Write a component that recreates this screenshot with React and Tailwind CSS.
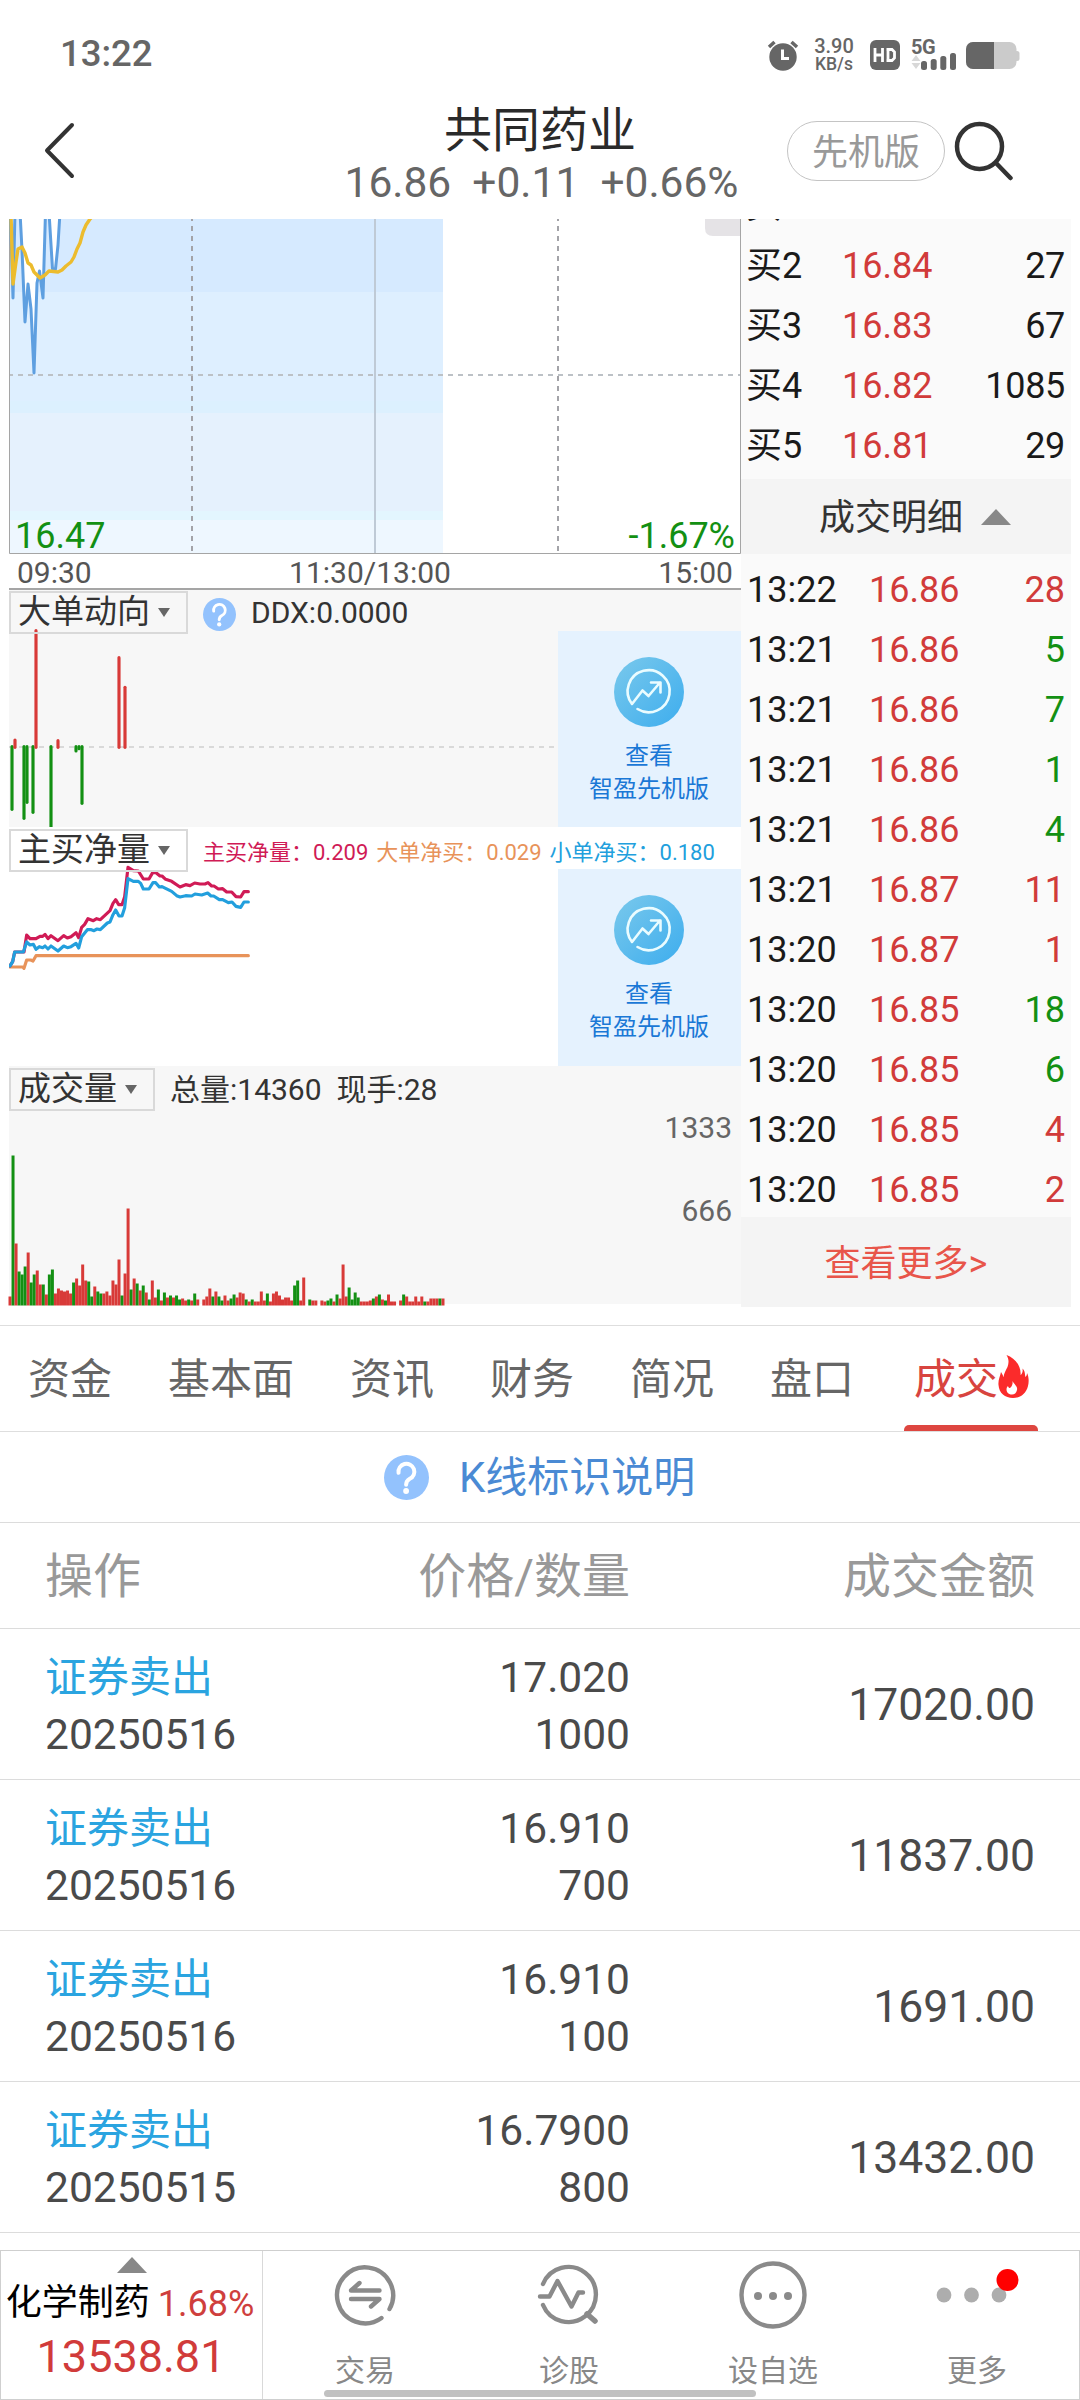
const buyRows = [
  { label: '买1' },
  { label: '买2', price: '16.84', qty: '27' },
  { label: '买3', price: '16.83', qty: '67' },
  { label: '买4', price: '16.82', qty: '1085' },
  { label: '买5', price: '16.81', qty: '29' },
]

const ticks = [
  { time: '13:22', price: '16.86', qty: '28', up: true },
  { time: '13:21', price: '16.86', qty: '5', up: false },
  { time: '13:21', price: '16.86', qty: '7', up: false },
  { time: '13:21', price: '16.86', qty: '1', up: false },
  { time: '13:21', price: '16.86', qty: '4', up: false },
  { time: '13:21', price: '16.87', qty: '11', up: true },
  { time: '13:20', price: '16.87', qty: '1', up: true },
  { time: '13:20', price: '16.85', qty: '18', up: false },
  { time: '13:20', price: '16.85', qty: '6', up: false },
  { time: '13:20', price: '16.85', qty: '4', up: true },
  { time: '13:20', price: '16.85', qty: '2', up: true },
]

const tabs = ['资金', '基本面', '资讯', '财务', '简况', '盘口']

const trades = [
  { date: '20250516', price: '17.020', qty: '1000', amount: '17020.00' },
  { date: '20250516', price: '16.910', qty: '700', amount: '11837.00' },
  { date: '20250516', price: '16.910', qty: '100', amount: '1691.00' },
  { date: '20250515', price: '16.7900', qty: '800', amount: '13432.00' },
]

// [x, from, to, up]
const ddxBars = [
  [36, 500, 688, false],
  [45, 480, 502, true],
  [72, 500, 715, false],
  [81, 500, 667, false],
  [99, 500, 697, false],
  [108, 152, 502, true],
  [153, 500, 742, false],
  [174, 482, 502, true],
  [228, 500, 513, false],
  [237, 500, 506, false],
  [246, 500, 670, false],
  [357, 233, 502, true],
  [375, 322, 502, true],
]

// one entry per minute: bar height + r (up) / g (down)
const volume = (
  '9r 150g 62r 34g 31g 39g 53r 23g 31g 35r 21r 21g 11r 31g 36g 12r 17r 15r 14r 15r 12r 23g 27r 20r 41r 25r 24g 9g 19r 14g ' +
  '12g 12r 14r 10r 25r 21r 46r 10g 32r 97r 16g 27r 22g 15r 20g 13r 6g 25r 8r 16g 5r 13g 8r 10g 8r 10g 6g 7r 5r 6g 5r 12g 6r 0r ' +
  '6r 9r 17r 9g 14r 9g 5g 10r 5r 7g 11g 8r 13r 12r 6g 4r 6g 4r 4r 14r 5r 12g 4r 12r 14r 10r 6r 8r 8r 5r 20g 25g 5r 28r 0r ' +
  '6g 5r 5r 0r 5r 4r 5g 7g 4r 11g 7r 41r 9r 18g 6g 13g 8g 4r 4r 4r 5r 7g 9r 11g 6r 5g 11r 4r 4r 0r 5r 11g 9r 4r 4r 9r 4r 9r 4g 4r 7r 7r 7r 7g 7r'
).split(' ').map((v) => ({ h: parseInt(v), up: v.endsWith('r') }))

const RED = '#d83a38'
const GREEN = '#139013'

const StatusBar = () => (
  <div className="h-[106px] flex items-center justify-between pl-[60px] pr-[60px] text-[#666]">
    <span className="text-[36.500px] leading-none font-medium pt-[2px]">13:22</span>
    <div className="flex items-center h-[34px] mt-1">
      <svg className="w-8 h-8" viewBox="0 0 32 32">
        <circle cx="16" cy="18" r="13.7" fill="#666" />
        <path d="M2 8 L7.5 3 M30 8 L24.5 3" stroke="#666" strokeWidth="3.5" fill="none" />
        <path d="M15.5 10.5 V19.5 H22" stroke="#fff" strokeWidth="3" fill="none" />
      </svg>
      <div className="ml-3 w-[46px] text-center font-medium">
        <div className="text-[20px] leading-[18px]">3.90</div>
        <div className="text-[17.5px] leading-[18px]">KB/s</div>
      </div>
      <svg className="ml-[13px] w-[30px] h-[30px]" viewBox="0 0 30 30">
        <rect width="30" height="30" rx="6" fill="#666" />
        <path d="M5 8 V22 M12.5 8 V22 M5 15 H12.5 M18 9.3 V20.7 M16.5 9.5 H22 L24.5 12 V18 L22 20.5 H16.5" stroke="#fff" strokeWidth="2.8" fill="none" />
      </svg>
      <div className="relative ml-[11px] w-[46px] h-[32px]">
        <span className="absolute left-0 -top-px text-[20px] leading-[18px] font-bold tracking-[-0.5px]">5G</span>
        <svg className="absolute inset-0 w-full h-full" viewBox="0 0 46 32">
          <path d="M0.5 22 L5 16 L9.5 22 Z M0.5 24 L5 30 L9.5 24 Z" fill="#d8d8d8" />
          <rect x="10" y="22" width="6" height="9" rx="2.5" fill="#666" />
          <rect x="19.7" y="20" width="6" height="11" rx="2.5" fill="#666" />
          <rect x="29.3" y="17" width="6" height="14" rx="2.5" fill="#666" />
          <rect x="39" y="14" width="6" height="17" rx="2.5" fill="#666" />
        </svg>
      </div>
      <svg className="ml-[9px] w-[54px] h-[27px]" viewBox="0 0 54 27">
        <rect width="50.5" height="27" rx="7" fill="#cbcbcb" />
        <rect x="48" y="9" width="5.5" height="10" rx="2.5" fill="#cbcbcb" />
        <path d="M7 0 H28 V27 H7 A7 7 0 0 1 0 20 V7 A7 7 0 0 1 7 0 Z" fill="#666" />
      </svg>
    </div>
  </div>
)

const Header = () => (
  <div className="relative h-[113px]">
    <div className="flex flex-col items-center h-full pt-px">
      <h1 className="text-[48px] leading-[48px] text-[#2a2a2a]">共同药业</h1>
      <p className="mt-[4px] text-[42.500px] leading-[48px] text-[#666] whitespace-pre pl-[3px]">16.86  +0.11  +0.66%</p>
    </div>
    <svg className="absolute left-[42px] top-[15px] w-9 h-[60px]" viewBox="0 0 36 60">
      <path d="M30 4 L5 29.5 L30 55" fill="none" stroke="#333" strokeWidth="4" strokeLinecap="round" strokeLinejoin="round" />
    </svg>
    <div className="absolute left-[787px] top-[15px] flex items-center gap-[9px]">
      <div className="w-[158px] h-[60px] rounded-full border border-[#c4c4c4] text-[36px] leading-none text-[#999] flex items-center justify-center pt-[3px]">
        先机版
      </div>
      <svg className="w-[62px] h-[60px]" viewBox="0 0 62 60">
        <circle cx="25.5" cy="25.5" r="22.5" fill="none" stroke="#333" strokeWidth="4.5" />
        <path d="M42 42 L56.5 57" stroke="#333" strokeWidth="4.5" strokeLinecap="round" />
      </svg>
    </div>
  </div>
)

const PriceChart = () => (
  <div className="relative h-[335px]">
    <svg className="absolute inset-0 w-full h-full" viewBox="9 219 732 335">
      <defs>
        <clipPath id="area">
          <path d="M9 190 L13 298 L15 219 L20.5 219 L22 250 L25 322 L28 284 L31 309 L34 374 L37 283 L39.5 271 L43 298 L45.5 219 L49 219 L52.5 269 L55.5 269 L58 245 L60 219 H443 V554 H9 Z" />
        </clipPath>
      </defs>
      <g clipPath="url(#area)">
        <rect x="9" y="219" width="434" height="73" fill="#d6eaff" />
        <rect x="9" y="292" width="434" height="109" fill="#deefff" />
        <rect x="9" y="401" width="434" height="12" fill="#dcf0fe" />
        <rect x="9" y="413" width="434" height="98" fill="#e5f1fd" />
        <rect x="9" y="511" width="434" height="9" fill="#e3f6fe" />
        <rect x="9" y="520" width="434" height="34" fill="#eef7ff" />
      </g>
      <path d="M192 219 V554 M558 219 V554" stroke="#a3a3a8" strokeWidth="2" strokeDasharray="5 5" strokeDashoffset="3" />
      <path d="M9 375 H741" stroke="#bcc1c6" strokeWidth="2" strokeDasharray="5 5" strokeDashoffset="1" />
      <path d="M375 219 V554" stroke="#bfcad6" strokeWidth="2" />
      <path d="M705 219 H740 V236 H713 Q705 236 705 228 Z" fill="#e5e3e6" />
      <path d="M9.5 219 V553.5 H740.5 V219" fill="none" stroke="#a5a5a5" />
      <path
        d="M10 200 L13 298 L15 212 L20 212 L22 250 L25 322 L28 284 L31 309 L34 373 L37 283 L39.5 271 L43 298 L45.5 212 L49 212 L52.5 269 L55.5 269 L58 245 L60 212"
        fill="none" stroke="#5e9fe0" strokeWidth="3" strokeLinejoin="round"
      />
      <path
        d="M11 215 L13 284 L16 262 L18 249 L22 247 L25 253 L28 263 L31 265 L34 272 L40 278 L45 275 L49 271 L58 272 L62 270 L66 266 L71 262 L74 257 L77 249 L80 243 L83 232 L86 225 L90 219 L95 214"
        fill="none" stroke="#ecbc2e" strokeWidth="3.400" strokeLinejoin="round"
      />
    </svg>
    <div className="relative h-full flex items-end justify-between pl-[6px] pr-[6px] text-[36px] leading-[36px] text-[#139013]">
      <span>16.47</span>
      <span>-1.67%</span>
    </div>
  </div>
)

const TimeAxis = () => (
  <div className="h-9 flex items-center justify-between border-b-2 border-[#a5a5a5] text-[30px] leading-none text-[#555] pl-2 pr-2 pt-[3px]">
    <span>09:30</span>
    <span className="-ml-[10px]">11:30/13:00</span>
    <span>15:00</span>
  </div>
)

const Selector = ({ children }) => (
  <div className="relative h-[43px] border-2 border-[#d9d9d9] flex items-center pl-[7px] pr-4 text-[33px] leading-none text-[#333]">
    <span className="relative -top-px">{children}</span>
    <svg className="ml-[8px] w-3 h-[9px]" viewBox="0 0 12 9">
      <path d="M0 0 H12 L6 9 Z" fill="#666" />
    </svg>
  </div>
)

const HelpIcon = ({ className }) => (
  <svg className={className} viewBox="0 0 34 34">
    <circle cx="17" cy="17" r="17" fill="#93c2fd" />
    <path d="M11 13.5 A6 6 0 1 1 19.5 18 Q16.7 19.5 16.7 22.5" fill="none" stroke="#fff" strokeWidth="3" strokeLinecap="round" />
    <circle cx="16.7" cy="27.2" r="2.2" fill="#fff" />
  </svg>
)

const PromoCard = ({ className }) => (
  <div className={`absolute right-0 bottom-0 w-[183px] bg-[#e5f2fe] flex flex-col items-center pt-[26px] pr-px text-[24px] leading-[33px] text-[#1a78d6] ${className}`}>
    <svg className="w-[70px] h-[70px] mb-[13px]" viewBox="0 0 70 70">
      <defs>
        <linearGradient id="promo" x1="0" y1="0" x2="1" y2="1">
          <stop offset="0.1" stopColor="#74c6ec" />
          <stop offset="1" stopColor="#3dadee" />
        </linearGradient>
      </defs>
      <circle cx="35" cy="35" r="35" fill="url(#promo)" />
      <g fill="none" stroke="#eafcff" strokeWidth="2.6" strokeLinecap="round" strokeLinejoin="round">
        <path d="M23.5 52 A21 21 0 1 0 18 47 L28.5 33.5 L34.5 39 L46 25.5 M37 25.5 H46.5 V35.5" />
      </g>
    </svg>
    <span>查看</span>
    <span>智盈先机版</span>
  </div>
)

const DdxPanel = () => (
  <div className="relative h-[237px] bg-[#f7f7f7]">
    <svg className="absolute inset-0 w-full h-full overflow-visible" viewBox="27 30 2196 711">
      <path d="M27 501 H1674" stroke="#cfcfcf" strokeWidth="5" strokeDasharray="15 15" />
      {ddxBars.map(([x, y1, y2, up]) => (
        <line key={x} x1={x} x2={x} y1={y1} y2={y2} stroke={up ? RED : GREEN} strokeWidth="9.500" strokeLinecap="round" />
      ))}
    </svg>
    <div className="relative flex items-center pt-px">
      <Selector>大单动向</Selector>
      <HelpIcon className="ml-[15px] w-[33px] h-[33px] mt-1" />
      <span className="ml-[15px] text-[30px] leading-none text-[#333]">DDX:0.0000</span>
    </div>
    <PromoCard className="h-[196px]" />
  </div>
)

const NetBuyPanel = () => (
  <div className="relative h-[239px] bg-white">
    <svg className="absolute inset-0 w-full h-full" viewBox="27 21 2196 717">
      <g fill="none" strokeWidth="9.500" strokeLinejoin="round" strokeLinecap="round">
        <polyline stroke="#e8935a" points="30,441 68,441 72,445 80,420 92,420 99,423 108,407 745,407" />
        <polyline stroke="#d01b56" points="30,438 38,425 44,396 72,396 80,345 90,356 108,356 120,349 128,349 135,343 144,356 153,347 174,362 191,347 202,354 213,350 228,338 236,353 245,322 254,313 264,296 280,302 290,296 301,299 330,272 339,250 347,239 356,254 366,254 374,230 384,142 400,152 415,153 430,177 447,177 458,158 468,158 480,168 486,168 497,178 515,184 540,201 557,194 570,197 584,189 600,192 615,192 624,188 635,198 642,198 655,207 668,206 680,216 695,216 708,230 722,231 732,215 745,215" />
        <polyline stroke="#229fdd" points="30,438 38,425 44,396 70,396 80,366 90,375 100,373 108,388 118,380 128,383 135,378 144,387 153,378 174,393 191,378 202,383 213,380 228,370 236,384 245,350 262,329 274,329 282,332 291,327 301,329 322,309 330,306 339,284 347,270 357,288 366,288 374,263 384,176 400,184 415,184 422,190 430,207 447,207 459,188 467,188 478,201 486,200 515,214 530,227 540,231 557,227 575,228 585,222 605,225 623,219 633,228 641,228 658,239 668,239 685,248 696,246 708,259 722,262 732,246 745,246" />
      </g>
    </svg>
    <div className="relative flex items-center pt-[2px]">
      <Selector>主买净量</Selector>
      <div className="ml-[15px] mt-1 flex gap-[8px] text-[22px] leading-none whitespace-nowrap">
        <span className="text-[#d01b56]">主买净量：0.209</span>
        <span className="text-[#e8935a]">大单净买：0.029</span>
        <span className="text-[#229fdd]">小单净买：0.180</span>
      </div>
    </div>
    <PromoCard className="h-[197px]" />
  </div>
)

const VolumePanel = () => (
  <div className="relative h-[238px] bg-[#f7f7f7]">
    <svg className="absolute inset-0 w-full h-full overflow-visible" viewBox="0 0 732 238">
      {volume.map((v, i) => {
        const x = 1 + (i * 433) / (volume.length - 1)
        return v.h > 0 && (
          <line key={i} x1={x} x2={x} y1={239.5} y2={239.5 - v.h} stroke={v.up ? RED : GREEN} strokeWidth="3" />
        )
      })}
    </svg>
    <div className="relative flex items-center pt-[2px]">
      <Selector>成交量</Selector>
      <span className="ml-[15px] text-[30px] leading-none text-[#333] whitespace-pre">总量:14360  现手:28</span>
    </div>
    <div className="relative flex flex-col items-end pr-[9px] -mt-px text-[30px] leading-[36px] text-[#666]">
      <span>1333</span>
      <span className="mt-[47px]">666</span>
    </div>
  </div>
)

const Quotes = () => (
  <div className="w-[330px] bg-[#fafafa] text-[36px] leading-none text-[#1a1a1a]">
    <div className="h-[260px] overflow-hidden flex flex-col justify-end pb-[5px]">
      {buyRows.map((row) => (
        <div key={row.label} className="h-[60px] shrink-0 flex items-center pl-[5px] pr-[6px] pt-[3px]">
          <span className="w-[96px]">{row.label}</span>
          <span className="text-[#d13b3a]">{row.price}</span>
          <span className="ml-auto tracking-[-0.3px]">{row.qty}</span>
        </div>
      ))}
    </div>
    <div className="h-[75px] bg-[#f4f4f4] flex items-center justify-center text-[#333] pl-[18px]">
      <span className="pt-[2px]">成交明细</span>
      <svg className="ml-[18px] w-[30px] h-4" viewBox="0 0 30 16">
        <path d="M15 0 L30 16 H0 Z" fill="#888" />
      </svg>
    </div>
    <div className="h-[663px] pt-[4px]">
      {ticks.map((tick, i) => (
        <div key={i} className="h-[60px] flex items-center pl-[6px] pr-[6px] pt-[3px]">
          <span className="w-[122px]">{tick.time}</span>
          <span className="text-[#d13b3a]">{tick.price}</span>
          <span className={`ml-auto ${tick.up ? 'text-[#d13b3a]' : 'text-[#139013]'}`}>{tick.qty}</span>
        </div>
      ))}
    </div>
    <div className="h-[90px] bg-[#f4f4f4] flex items-center justify-center pt-[3px] text-[#e8554a]">查看更多&gt;</div>
  </div>
)

const Tabs = () => (
  <div className="mt-[18px] h-[107px] border-y border-[#dedede] flex items-stretch pl-7 gap-14 text-[42px] leading-none text-[#666]">
    {tabs.map((tab) => (
      <div key={tab} className="flex items-center pt-[3px]">{tab}</div>
    ))}
    <div className="-ml-[6px] w-[134px] flex flex-col text-[#d8443f]">
      <div className="flex-1 flex items-center pl-[10px] pt-[9px]">
        成交
        <svg className="w-[31px] h-[43px] -mt-[7px]" viewBox="0 0 31 43">
          <path d="M8.5 0 C17 3 23.5 11 22.5 20 C24.500 19 25 16 24.500 13.500 C26.500 15 27 18 27.300 22 C28.500 21 29 20 29 18 C31 22 31 27 30 31 C28 39 22 43 15 43 C7 43 1 38 0.500 30 C0 25 2 22 3 17 C4 19 5 20 5.500 22 C6 18 8 15 9.500 12 C11 8 11 4 8.500 0 Z" fill="#fb2b2b" />
          <path d="M14.500 26 C15.500 29 20 31 19 35 C18.300 38 16.500 39.500 14 39.500 C11 39.500 8.500 37.500 8.500 34.500 C8.500 33 9 32 10 31 C10.300 32.500 11 33 12 33 C14 31.500 15 29 14.500 26 Z" fill="#fff" />
        </svg>
      </div>
      <div className="h-[6px] rounded-t-[5px] bg-[#de4640]" />
    </div>
  </div>
)

const TradeTable = () => (
  <div className="text-[#4a4a4a]">
    <div className="h-[91px] border-b border-[#dcdcdc] flex items-center pl-[384px] text-[42px] leading-none text-[#4a8ad4]">
      <HelpIcon className="w-[45px] h-[45px] mr-[30px]" />
      <span className="pt-[2px]">K线标识说明</span>
    </div>
    <div className="h-[106px] border-b border-[#dcdcdc] flex items-center pl-[45px] pr-[45px] pt-[3px] text-[48px] leading-none text-[#999]">
      <span className="w-[240px]">操作</span>
      <span className="w-[345px] text-right">价格/数量</span>
      <span className="ml-auto">成交金额</span>
    </div>
    {trades.map((t, i) => (
      <div key={i} className="h-[151px] border-b border-[#dcdcdc] flex items-center pl-[45px] pr-[45px] pt-[3px] text-[42.500px] leading-[57px]">
        <div className="w-[240px]">
          <div className="text-[42px] text-[#2aa4e0]">证券卖出</div>
          <div>{t.date}</div>
        </div>
        <div className="w-[345px] text-right">
          <div>{t.price}</div>
          <div>{t.qty}</div>
        </div>
        <div className="ml-auto text-[44.500px]">{t.amount}</div>
      </div>
    ))}
  </div>
)

const NavItem = ({ label, children }) => (
  <div className="flex-1 flex flex-col items-center text-[30px] leading-none text-[#888]">
    <svg className="w-[90px] h-[88px]" viewBox="-45 -44 90 88" fill="none" stroke="#8a8a8a" strokeWidth="4.400" strokeLinecap="round" strokeLinejoin="round">
      {children}
    </svg>
    <span className="mt-[17px]">{label}</span>
  </div>
)

const BottomBar = () => (
  <div className="relative mt-auto h-[150px] border border-[#cfcfcf] bg-white flex">
    <div className="w-[262px] border-r border-[#d9d9d9] flex flex-col items-center leading-none">
      <svg className="mt-[6px] w-[30px] h-4" viewBox="0 0 30 16">
        <path d="M15 0 L30 16 H0 Z" fill="#888" />
      </svg>
      <div className="mt-[12px] -ml-[3px] text-[36px] flex gap-[8px] text-black">
        化学制药
        <span className="text-[#cf3f3d] pt-px">1.68%</span>
      </div>
      <div className="mt-[12px] -ml-px text-[45px] text-[#d13b3a]">13538.81</div>
    </div>
    <NavItem label="交易">
      <path d="M24.500 14 A28 28 0 1 0 16.500 23" />
      <path d="M14.500 -4.500 H-14 L-5.500 -12 M-14 4 H14.500 L6 11.500" />
    </NavItem>
    <NavItem label="诊股">
      <path d="M-26 -11 A27.500 27.500 0 1 1 -26 10" />
      <path d="M-29 1.500 H-19.500 L-11.500 -14 L2.500 11.500 L9.500 -2.500 H14" />
      <path d="M18 19 L26 26" strokeWidth="5.500" />
    </NavItem>
    <NavItem label="设自选">
      <circle r="31.500" />
      <g fill="#8a8a8a" stroke="none">
        <circle cx="-15" cy="1" r="4" />
        <circle cx="0" cy="1" r="4" />
        <circle cx="15" cy="1" r="4" />
      </g>
    </NavItem>
    <NavItem label="更多">
      <g fill="#adadad" stroke="none">
        <circle cx="-33" r="7.400" />
        <circle cx="-5.500" r="7.400" />
        <circle cx="22" r="7.400" />
        <circle cx="30.500" cy="-15" r="11" fill="#f00" />
      </g>
    </NavItem>
    <div className="absolute left-[323px] bottom-[2px] w-[432px] h-[7px] rounded-full bg-[#c1c1c1]" />
  </div>
)

export default function App() {
  return (
    <div className="w-[1080px] h-[2400px] bg-white overflow-hidden flex flex-col font-['Roboto','Noto_Sans_CJK_SC',sans-serif]">
      <StatusBar />
      <Header />
      <div className="flex pl-[9px] pr-[9px] h-[1088px]">
        <div className="w-[732px]">
          <PriceChart />
          <TimeAxis />
          <DdxPanel />
          <NetBuyPanel />
          <VolumePanel />
        </div>
        <Quotes />
      </div>
      <Tabs />
      <TradeTable />
      <BottomBar />
    </div>
  )
}
